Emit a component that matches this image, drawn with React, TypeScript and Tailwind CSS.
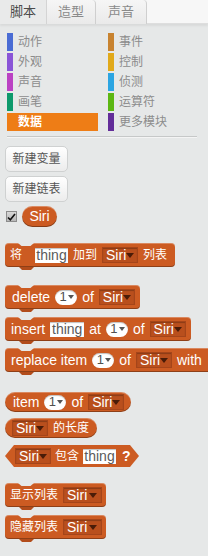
import type { ReactNode } from 'react';

const font = "font-['Liberation_Sans','Noto_Sans_CJK_SC',sans-serif]";

const categories = [
  { left: { name: '动作', color: 'bg-[#4a6cd4]' }, right: { name: '事件', color: 'bg-[#c88330]' } },
  { left: { name: '外观', color: 'bg-[#8a55d7]' }, right: { name: '控制', color: 'bg-[#e1a91a]' } },
  { left: { name: '声音', color: 'bg-[#bb42c3]' }, right: { name: '侦测', color: 'bg-[#2ca5e2]' } },
  { left: { name: '画笔', color: 'bg-[#0e9a6c]' }, right: { name: '运算符', color: 'bg-[#5cb712]' } },
  { left: { name: '数据', color: 'bg-[#ee7d16]' }, right: { name: '更多模块', color: 'bg-[#632d99]' } },
];

export default function App() {
  return (
    <div className={`${font} flex h-[556px] w-[208px] flex-col overflow-hidden bg-[#e6e8e8]`}>
      {/* tab strip */}
      <div className="flex h-[24px] shrink-0 bg-[#f4f5f5] shadow-[0_2px_2px_rgba(0,0,0,0.06)]">
        <div className="flex w-[47px] items-center justify-center border-r border-[#d4d4d4] bg-[#e9eaea] text-[13px] text-[#4a4a4a]">
          脚本
        </div>
        <div className="flex w-[49px] items-center justify-center rounded-t-[4px] border-r border-[#cfcfcf] bg-gradient-to-b from-[#f6f6f6] to-[#eaeaea] text-[13px] text-[#8a8a8a]">
          造型
        </div>
        <div className="flex w-[51px] items-center justify-center rounded-t-[4px] border-r border-[#cfcfcf] bg-gradient-to-b from-[#f6f6f6] to-[#eaeaea] text-[13px] text-[#8a8a8a]">
          声音
        </div>
        <div className="flex-1 border-b border-[#dedede] bg-[#f7f7f7]" />
      </div>

      {/* categories */}
      <div className="ml-[7px] mt-[9px] grid w-[190px] grid-cols-[91px_1fr] gap-x-[10px] gap-y-[2px]">
        {categories.map((row) => (
          <Row key={row.left.name} left={row.left} right={row.right} />
        ))}
      </div>
      <div className="ml-[7px] mt-[5px] h-[1px] w-[190px] bg-[#c6c8c8]" />
      <div className="ml-[7px] h-[1px] w-[190px] bg-[#f4f4f4]" />

      {/* buttons */}
      <MakeButton label="新建变量" className="mt-[8px]" />
      <MakeButton label="新建链表" className="mt-[4px]" />

      <div className="ml-[6px] mt-[4px] flex h-[21px] items-center gap-[5px]">
        <div className="flex h-[11px] w-[11px] items-center justify-center border border-[#8c8c8c] bg-gradient-to-b from-[#d8d8d8] to-[#b8b8b8]">
          <svg width="9" height="8" viewBox="0 0 9 8">
            <path d="M1 4.5 L3.3 6.8 L8 1" fill="none" stroke="#111" strokeWidth="1.6" />
          </svg>
        </div>
        <div className="flex h-[21px] w-[35px] items-center justify-center rounded-full bg-[#cc5b22] text-[14px] text-white shadow-[inset_0_1px_0_rgba(255,255,255,0.3),inset_0_-1px_0_rgba(0,0,0,0.35)]">
          Siri
        </div>
      </div>

      <div className="mt-[16px] flex flex-col items-start gap-0 pl-[5px]">
        <Stack className="pl-[5px] pr-[8px]">
          <Cjk className="mr-[8px]">将</Cjk>
          <TextIn w="w-[33px]" />
          <Cjk>加到</Cjk>
          <Drop />
          <Cjk>列表</Cjk>
        </Stack>

        <Stack className="mt-[18px] pl-[7px] pr-[5px]">
          <span>delete</span>
          <Num />
          <span>of</span>
          <Drop />
        </Stack>

        <Stack className="mt-[8px] pl-[6px] pr-[5px]">
          <span>insert</span>
          <TextIn w="w-[34px]" />
          <span>at</span>
          <Num />
          <span>of</span>
          <Drop />
        </Stack>

        <Stack className="mt-[7px] pl-[6px] pr-[40px]">
          <span className="whitespace-nowrap">replace item</span>
          <Num />
          <span>of</span>
          <Drop />
          <span>with</span>
        </Stack>

        <Reporter className="mt-[20px] pl-[8px] pr-[7px]">
          <span>item</span>
          <Num />
          <span>of</span>
          <Drop />
        </Reporter>

        <Reporter className="mt-[6px] pl-[7px] pr-[8px]">
          <Drop />
          <Cjk>的长度</Cjk>
        </Reporter>

        <div className="mt-[7px] flex h-[22px] w-[134px] items-center gap-[4px] bg-[#cc5b22] pl-[10px] text-[14px] text-white [clip-path:polygon(0_50%,9px_0,calc(100%_-_9px)_0,100%_50%,calc(100%_-_9px)_100%,9px_100%)]">
          <Drop />
          <Cjk>包含</Cjk>
          <TextIn w="w-[33px]" />
          <span className="ml-[2px] font-bold">?</span>
        </div>

        <Stack className="mt-[16px] pl-[5px] pr-[4px]">
          <Cjk>显示列表</Cjk>
          <Drop w="w-[39px]" />
        </Stack>

        <Stack className="mt-[8px] pl-[5px] pr-[4px]">
          <Cjk>隐藏列表</Cjk>
          <Drop w="w-[39px]" />
        </Stack>
      </div>
    </div>
  );
}

function Row({
  left,
  right,
}: {
  left: { name: string; color: string };
  right: { name: string; color: string };
}) {
  const selected = left.name === '数据';
  return (
    <>
      {selected ? (
        <div className="flex h-[18px] items-center bg-[#ee7d16] pl-[11px] text-[12px] font-bold text-white">
          {left.name}
        </div>
      ) : (
        <div className="flex h-[18px] items-center gap-[5px] text-[12px] text-[#8c8c8c]">
          <span className={`h-full w-[6px] ${left.color}`} />
          {left.name}
        </div>
      )}
      <div className="flex h-[18px] items-center gap-[5px] text-[12px] text-[#8c8c8c]">
        <span className={`h-full w-[6px] ${right.color}`} />
        {right.name}
      </div>
    </>
  );
}

function MakeButton({ label, className }: { label: string; className: string }) {
  return (
    <div
      className={`ml-[5px] flex h-[26px] w-[63px] items-center justify-center rounded-[5px] border border-[#cfd1d1] bg-gradient-to-b from-[#ffffff] to-[#ececec] text-[12px] text-[#555] ${className}`}
    >
      {label}
    </div>
  );
}

function Stack({ children, className }: { children: ReactNode; className: string }) {
  return (
    <div
      className={`relative flex h-[24px] shrink-0 items-center gap-[5px] whitespace-nowrap rounded-[4px] bg-[#cc5b22] text-[14px] text-white shadow-[inset_0_1px_0_rgba(255,255,255,0.28),inset_0_-1px_0_rgba(0,0,0,0.3)] ${className}`}
    >
      <span className="absolute left-[13px] top-0 h-[3px] w-[16px] bg-[#e6e8e8] [clip-path:polygon(0_0,100%_0,78%_100%,22%_100%)]" />
      {children}
      <span className="absolute left-[14px] top-full h-[3px] w-[15px] bg-[#b24c1b] [clip-path:polygon(0_0,100%_0,80%_100%,20%_100%)]" />
    </div>
  );
}

function Reporter({ children, className }: { children: ReactNode; className: string }) {
  return (
    <div
      className={`flex h-[20px] shrink-0 items-center gap-[5px] whitespace-nowrap rounded-full bg-[#cc5b22] text-[14px] text-white shadow-[inset_0_1px_0_rgba(255,255,255,0.28),inset_0_-1px_0_rgba(0,0,0,0.3)] ${className}`}
    >
      {children}
    </div>
  );
}

function Cjk({ children, className = '' }: { children: ReactNode; className?: string }) {
  return <span className={`text-[12px] ${className}`}>{children}</span>;
}

function TextIn({ w }: { w: string }) {
  return (
    <span
      className={`flex h-[15px] ${w} items-center justify-center bg-white text-[14px] text-[#5a5a5a] shadow-[inset_0_1px_1px_rgba(0,0,0,0.25)]`}
    >
      thing
    </span>
  );
}

function Num() {
  return (
    <span className="flex h-[15px] w-[22px] items-center justify-center gap-[1px] rounded-full bg-white pl-[1px] text-[13px] text-[#505050] shadow-[inset_0_1px_1px_rgba(0,0,0,0.25)]">
      1
      <span className="h-0 w-0 border-l-[3px] border-r-[3px] border-t-[4px] border-l-transparent border-r-transparent border-t-[#555]" />
    </span>
  );
}

function Drop({ w = 'w-[36px]' }: { w?: string }) {
  return (
    <span
      className={`flex h-[16px] ${w} items-center justify-between border border-[#a5451a] bg-[#b94f1d] pl-[3px] pr-[4px] text-[14px] text-white shadow-[inset_0_1px_1px_rgba(0,0,0,0.25)]`}
    >
      Siri
      <span className="h-0 w-0 border-l-[4px] border-r-[4px] border-t-[5px] border-l-transparent border-r-transparent border-t-[#4a1c08]" />
    </span>
  );
}
